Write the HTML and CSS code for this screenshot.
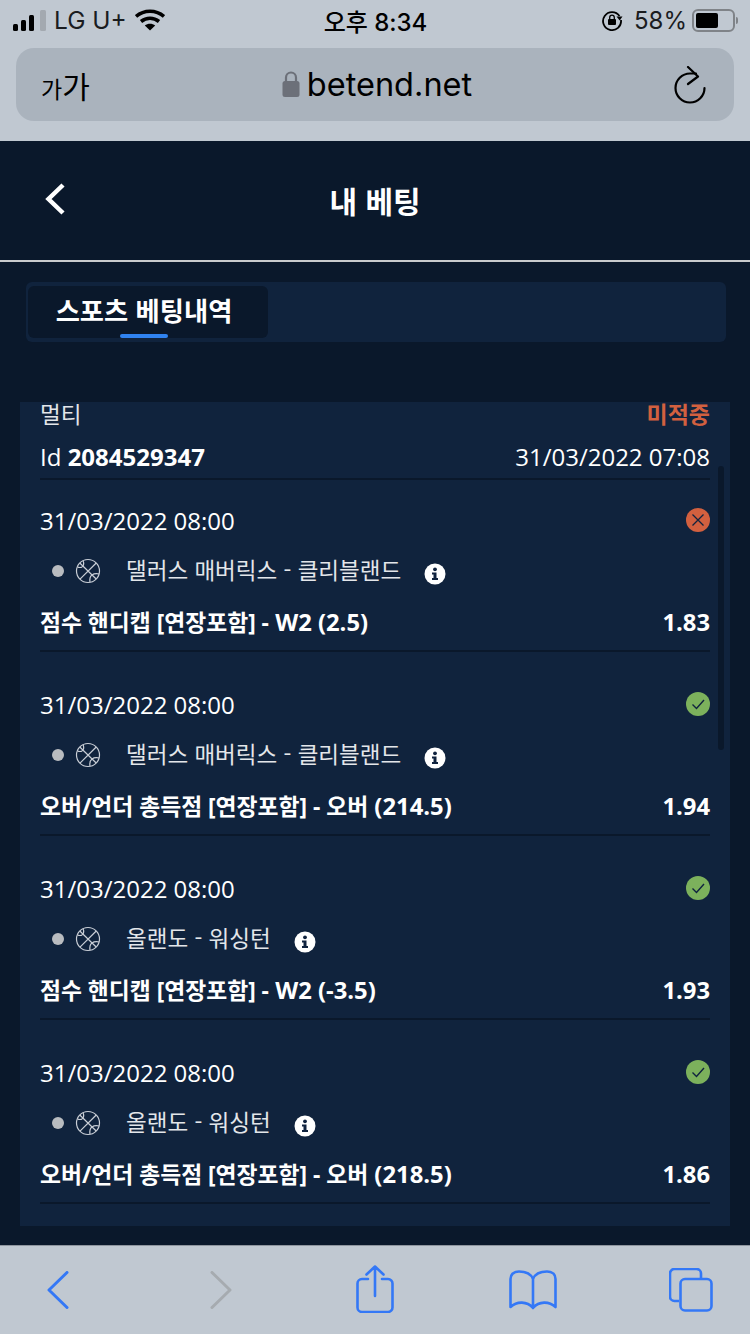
FILE: index.html
```html
<!DOCTYPE html>
<html lang="ko">
<head>
    <meta charset="UTF-8">
    <meta name="viewport" content="width=device-width, initial-scale=1.0">
    <title>내 베팅</title>
    <link rel="stylesheet" href="styles.css">
</head>
<body>
    <div class="browser-top">
        <div class="status-bar">
            <div class="status-left">
                <svg class="signal" width="34" height="21" viewBox="0 0 34 21">
                    <rect x="0" y="14" width="5" height="7" rx="1.5" fill="#000"/>
                    <rect x="8" y="10" width="5" height="11" rx="1.5" fill="#000"/>
                    <rect x="16" y="5" width="5" height="16" rx="1.5" fill="#000"/>
                    <rect x="27" y="0" width="6" height="21" rx="1.5" fill="#a3a9b0"/>
                </svg>
                <span class="carrier">LG U+</span>
                <svg class="wifi" width="30" height="22" viewBox="0 0 30 22">
                    <path d="M1 7.500C9 .5 21 .5 29 7.500" fill="none" stroke="#000" stroke-width="3.600"/>
                    <path d="M6 12.500c5.400-4.400 12.600-4.400 18 0" fill="none" stroke="#000" stroke-width="3.600"/>
                    <path d="M15 21.500 9.800 16.500c3-2.400 7.400-2.400 10.400 0z" fill="#000"/>
                </svg>
            </div>
            <div class="status-time">오후 8:34</div>
            <div class="status-right">
                <svg width="22" height="22" viewBox="0 0 22 22">
                    <path d="M18.500 7A9 9 0 1 0 20 11" fill="none" stroke="#000" stroke-width="1.800"/>
                    <path d="M15.500 7.500h6l-2.800 4z" fill="#000"/>
                    <rect x="7" y="10" width="8" height="6" rx="1" fill="#000"/>
                    <path d="M8.700 10V8.500a2.300 2.300 0 0 1 4.600 0V10" fill="none" stroke="#000" stroke-width="1.300"/>
                </svg>
                <span class="battery-text">58%</span>
                <div class="battery"><div class="battery-level"></div></div>
                <div class="battery-tip"></div>
            </div>
        </div>
        <div class="url-bar">
            <span class="aa"><span class="aa-small">가</span>가</span>
            <div class="url">
                <svg width="18" height="26" viewBox="0 0 18 26">
                    <rect x="0.500" y="10" width="17" height="16" rx="2.500" fill="#6c7079"/>
                    <path d="M4 11V6.500a5 5 0 0 1 10 0V11" fill="none" stroke="#6c7079" stroke-width="2.200"/>
                </svg>
                <span>betend.net</span>
            </div>
            <svg class="reload" width="32" height="38" viewBox="0 0 32 38">
                <path d="M30.500 22A14.500 14.500 0 1 1 16 7.500h6" fill="none" stroke="#000" stroke-width="2.200" stroke-linecap="round"/>
                <path d="M14 1 24 10.500 14 18" fill="none" stroke="#000" stroke-width="2.200" stroke-linecap="round" stroke-linejoin="round"/>
            </svg>
        </div>
    </div>

    <div class="page">
        <div class="page-header">
            <svg class="back" width="22" height="34" viewBox="0 0 22 34">
                <path d="M19 3 4.500 17 19 31" fill="none" stroke="#fff" stroke-width="4.500"/>
            </svg>
            <h1>내 베팅</h1>
        </div>

        <div class="tabs">
            <div class="tab">스포츠 베팅내역</div>
        </div>

        <div class="panel">
            <div class="scrollbar"></div>
            <div class="bet-head">
                <div class="row row-type">
                    <span class="bet-type">멀티</span>
                    <span class="bet-status">미적중</span>
                </div>
                <div class="row row-id">
                    <span>Id <b>2084529347</b></span>
                    <span>31/03/2022 07:08</span>
                </div>
            </div>

            <div class="leg">
                <div class="row row-date">
                    <span>31/03/2022 08:00</span>
                    <svg class="result" width="24" height="24" viewBox="0 0 24 24">
                        <circle cx="12" cy="12" r="12" fill="#d2603f"/>
                        <path d="M6.500 6.500 17.500 17.500M17.500 6.500 6.500 17.500" stroke="#10233f" stroke-width="1.300"/>
                    </svg>
                </div>
                <div class="match">
                    <span class="dot"></span>
                    <svg class="ball" width="26" height="26" viewBox="0 0 26 26"><use href="#ball"/></svg>
                    <span class="teams">댈러스 매버릭스 - 클리블랜드</span>
                    <svg class="info" width="22" height="22" viewBox="0 0 22 22"><use href="#info"/></svg>
                </div>
                <div class="row row-market">
                    <span><span class="ko">점수 핸디캡 [연장포함] -</span> W2 (2.5)</span>
                    <span>1.83</span>
                </div>
            </div>

            <div class="leg">
                <div class="row row-date">
                    <span>31/03/2022 08:00</span>
                    <svg class="result" width="24" height="24" viewBox="0 0 24 24"><use href="#won"/></svg>
                </div>
                <div class="match">
                    <span class="dot"></span>
                    <svg class="ball" width="26" height="26" viewBox="0 0 26 26"><use href="#ball"/></svg>
                    <span class="teams">댈러스 매버릭스 - 클리블랜드</span>
                    <svg class="info" width="22" height="22" viewBox="0 0 22 22"><use href="#info"/></svg>
                </div>
                <div class="row row-market">
                    <span><span class="ko">오버/언더 총득점 [연장포함] - 오버</span> (214.5)</span>
                    <span>1.94</span>
                </div>
            </div>

            <div class="leg">
                <div class="row row-date">
                    <span>31/03/2022 08:00</span>
                    <svg class="result" width="24" height="24" viewBox="0 0 24 24"><use href="#won"/></svg>
                </div>
                <div class="match">
                    <span class="dot"></span>
                    <svg class="ball" width="26" height="26" viewBox="0 0 26 26"><use href="#ball"/></svg>
                    <span class="teams">올랜도 - 워싱턴</span>
                    <svg class="info" width="22" height="22" viewBox="0 0 22 22"><use href="#info"/></svg>
                </div>
                <div class="row row-market">
                    <span><span class="ko">점수 핸디캡 [연장포함] -</span> W2 (-3.5)</span>
                    <span>1.93</span>
                </div>
            </div>

            <div class="leg">
                <div class="row row-date">
                    <span>31/03/2022 08:00</span>
                    <svg class="result" width="24" height="24" viewBox="0 0 24 24"><use href="#won"/></svg>
                </div>
                <div class="match">
                    <span class="dot"></span>
                    <svg class="ball" width="26" height="26" viewBox="0 0 26 26"><use href="#ball"/></svg>
                    <span class="teams">올랜도 - 워싱턴</span>
                    <svg class="info" width="22" height="22" viewBox="0 0 22 22"><use href="#info"/></svg>
                </div>
                <div class="row row-market">
                    <span><span class="ko">오버/언더 총득점 [연장포함] - 오버</span> (218.5)</span>
                    <span>1.86</span>
                </div>
            </div>
        </div>
    </div>

    <div class="toolbar">
        <svg class="tb-back" width="22" height="38" viewBox="0 0 22 38"><path d="M20 1.500 2 19l18 17.500" fill="none" stroke="#3478f6" stroke-width="3" stroke-linecap="round" stroke-linejoin="round"/></svg>
        <svg class="tb-forward" width="22" height="38" viewBox="0 0 22 38"><path d="M2 1.500 20 19 2 36.500" fill="none" stroke="#a6abb0" stroke-width="3" stroke-linecap="round" stroke-linejoin="round"/></svg>
        <svg class="tb-share" width="38" height="48" viewBox="0 0 38 48">
            <path d="M12 14H6a4.500 4.500 0 0 0-4.500 4.500v24A4.500 4.500 0 0 0 6 47h26a4.500 4.500 0 0 0 4.500-4.500v-24A4.500 4.500 0 0 0 32 14h-6" fill="none" stroke="#3478f6" stroke-width="2.600" stroke-linecap="round"/>
            <path d="M19 31V1.500M10.500 9.500 19 1.500l8.500 8" fill="none" stroke="#3478f6" stroke-width="2.600" stroke-linecap="round" stroke-linejoin="round"/>
        </svg>
        <svg class="tb-book" width="48" height="40" viewBox="0 0 48 40">
            <path d="M24 9C22 4 17 1.500 10 1.500 4 1.500 1.500 5 1.500 9v28c6.500-6 16.500-6 22.500 1 6-7 16-7 22.500-1V9c0-4-2.500-7.500-8.500-7.500C31 1.500 26 4 24 9zM24 9v29" fill="none" stroke="#3478f6" stroke-width="2.600" stroke-linejoin="round"/>
        </svg>
        <svg class="tb-tabs" width="44" height="44" viewBox="0 0 44 44">
            <path d="M10 33H5.500a4.500 4.500 0 0 1-4.500-4.500v-23A4.500 4.500 0 0 1 5.500 1h22A4.500 4.500 0 0 1 32 5.500V11" fill="none" stroke="#3478f6" stroke-width="2.600"/>
            <rect x="11.500" y="11" width="31" height="31.500" rx="4.500" fill="none" stroke="#3478f6" stroke-width="2.600"/>
        </svg>
    </div>

    <!-- shared icons -->
    <svg class="icon-defs" width="0" height="0">
        <defs>
            <g id="ball" fill="none" stroke="#c9ced6" stroke-width="1.200">
                <circle cx="13" cy="13" r="11.500"/>
                <path d="M4.800 5 21.200 21M21.200 5 5 21.200"/>
                <path d="M2.500 9C5 10 8 9.500 8.500 7S8.500 3.500 8 2.500M15 24.200C14.500 21 15 18.500 17 17S22 15.500 24.300 16"/>
            </g>
            <g id="won">
                <circle cx="12" cy="12" r="12" fill="#7cb15c"/>
                <path d="M6.500 12.500 10.500 16.500 18 8" fill="none" stroke="#10233f" stroke-width="1.400"/>
            </g>
            <g id="info">
                <circle cx="11" cy="11" r="10.500" fill="#fff"/>
                <circle cx="11" cy="6.300" r="1.900" fill="#10233f"/>
                <path d="M8 9.500h4.500V15H14v2H8v-2h1.500v-3.500H8z" fill="#10233f"/>
            </g>
        </defs>
    </svg>
</body>
</html>
```

FILE: styles.css
```css
html, body {
    margin: 0;
    padding: 0;
    height: 1334px;
    overflow: hidden;
}

body {
    display: flex;
    flex-direction: column;
    background-color: #0a182b;
    color: #fff;
    font-family: "Open Sans", "Noto Sans CJK KR", sans-serif;
}

.browser-top {
    height: 141px;
    flex-shrink: 0;
    background-color: #c0c8d1;
    color: #000;
    font-family: Inter, "Noto Sans CJK KR", sans-serif;
}

.status-bar {
    height: 48px;
    padding: 0 12px 8px 13px;
    box-sizing: border-box;
    display: grid;
    grid-template-columns: 1fr auto 1fr;
    align-items: center;
}

.status-left {
    display: flex;
    align-items: center;
    gap: 7px;
}

.carrier {
    font-size: 24.500px;
    color: #1a1c1f;
}

.wifi {
    margin-left: 1px;
}

.status-time {
    font-size: 24px;
    font-weight: 500;
}

.status-right {
    display: flex;
    align-items: center;
    justify-content: flex-end;
}

.battery-text {
    font-size: 24px;
    margin: 0 5px 0 11px;
    color: #1a1c1f;
}

.battery {
    width: 43px;
    height: 23px;
    box-sizing: border-box;
    border: 2px solid #7f8388;
    border-radius: 6px;
    padding: 2px;
}

.battery-level {
    width: 22px;
    height: 15px;
    background-color: #000;
    border-radius: 2px;
}

.battery-tip {
    width: 2px;
    height: 7px;
    margin-left: 1px;
    background-color: #7f8388;
    border-radius: 0 2px 2px 0;
}

.url-bar {
    height: 73px;
    margin: 0 16px;
    padding: 0 28px 0 25px;
    display: grid;
    grid-template-columns: 1fr auto 1fr;
    align-items: center;
    background-color: #aab3bd;
    border-radius: 18px;
}

.aa {
    font-size: 30px;
}

.aa-small {
    font-size: 23px;
}

.url {
    display: flex;
    align-items: center;
    gap: 7px;
    font-size: 32.500px;
    margin-left: 7px;
}

.url svg {
    margin-top: -1px;
}

.reload {
    justify-self: end;
}

.page {
    flex: 1;
    min-height: 0;
}

.page-header {
    height: 119px;
    border-bottom: 2px solid #c9cbcd;
    display: flex;
    align-items: center;
    justify-content: center;
    position: relative;
}

.back {
    position: absolute;
    left: 44px;
    top: 41px;
}

.page-header h1 {
    margin: -2px 0 0;
    font-size: 30px;
    font-weight: 700;
    font-family: "Noto Sans CJK KR", sans-serif;
}

.tabs {
    height: 60px;
    margin: 20px 24px 60px 26px;
    box-sizing: border-box;
    padding: 4px 2px;
    background-color: #10233d;
    border-radius: 6px;
}

.tab {
    width: 240px;
    height: 52px;
    box-sizing: border-box;
    padding-right: 8px;
    background-color: #0a182b;
    border-radius: 6px;
    text-align: center;
    font-size: 26.300px;
    font-weight: 700;
    line-height: 48px;
    font-family: "Noto Sans CJK KR", sans-serif;
    position: relative;
}

.tab::after {
    content: "";
    position: absolute;
    left: 92px;
    bottom: 0;
    width: 48px;
    height: 4px;
    border-radius: 2px;
    background-color: #3083f0;
}

.panel {
    height: 824px;
    margin: 0 20px;
    padding: 0 20px;
    background-color: #10233d;
    position: relative;
}

.scrollbar {
    position: absolute;
    left: 698px;
    top: 64px;
    width: 6px;
    height: 284px;
    border-radius: 3px;
    background-color: #0a182b;
}

.row {
    display: flex;
    align-items: center;
    justify-content: space-between;
}

.bet-head {
    height: 76px;
    border-bottom: 2px solid #0a182b;
    font-size: 24px;
}

.row-type {
    height: 22px;
}

.bet-type {
    color: #e3e6ea;
    font-size: 22.500px;
    font-family: "Noto Sans CJK KR", sans-serif;
    line-height: 22px;
}

.bet-status {
    color: #d2603f;
    font-weight: 700;
    font-size: 23px;
    line-height: 22px;
    font-family: "Noto Sans CJK KR", sans-serif;
}

.row-id {
    height: 28px;
    margin-top: 18px;
}

.leg {
    height: 134px;
    padding: 26px 0 10px;
    margin-bottom: 12px;
    border-bottom: 2px solid #0a182b;
}

.row-date {
    height: 28px;
    font-size: 24px;
}

.match {
    height: 40px;
    margin-top: 15px;
    padding-left: 12px;
    display: flex;
    align-items: center;
}

.dot {
    width: 12px;
    height: 12px;
    margin-top: 4px;
    border-radius: 50%;
    background-color: #b9bcc0;
}

.ball {
    margin-left: 11px;
    margin-top: 3px;
}

.teams {
    margin-left: 25px;
    font-size: 22.500px;
    color: #e3e6ea;
    font-family: "Noto Sans CJK KR", sans-serif;
}

.info {
    margin-left: 23px;
    margin-top: 10px;
}

.row-market {
    height: 34px;
    margin-top: 16px;
    align-items: baseline;
    font-size: 23.800px;
    font-weight: 700;
}

.ko {
    font-size: 22.800px;
}

.toolbar {
    height: 89px;
    flex-shrink: 0;
    padding-left: 47px;
    box-sizing: border-box;
    display: flex;
    align-items: center;
    background-color: #c0c8d1;
    border-top: 1px solid #8e959e;
}

.tb-forward {
    margin-left: 141px;
}

.tb-share {
    margin-left: 124px;
    margin-top: -2px;
}

.tb-book {
    margin-left: 115px;
}

.tb-tabs {
    margin-left: 112px;
}

.icon-defs {
    position: absolute;
}
```
